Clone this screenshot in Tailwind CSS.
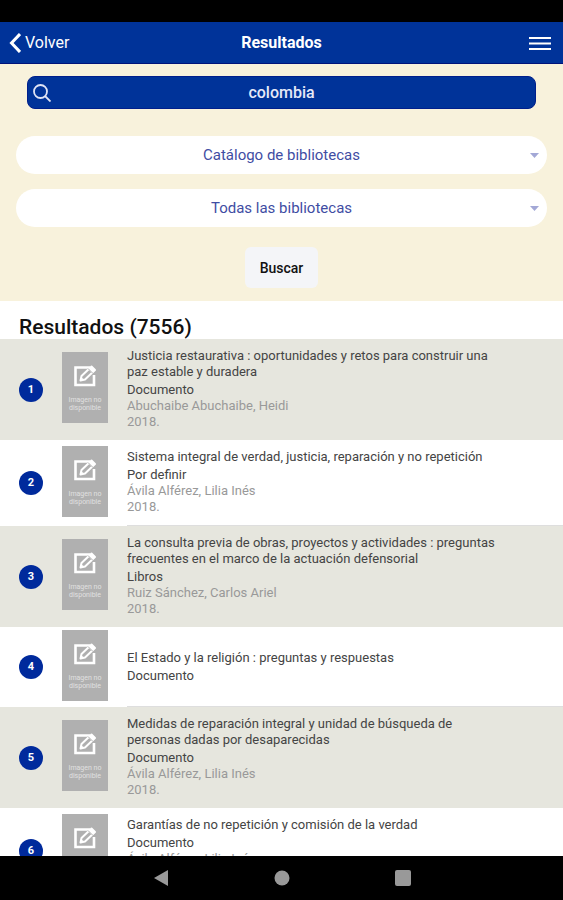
<!doctype html>
<html lang="es">
<head>
  <meta charset="UTF-8">
  <meta name="viewport" content="width=device-width, initial-scale=1.0">
  <title>Resultados</title>
  <script src="https://cdn.jsdelivr.net/npm/@tailwindcss/browser@4"></script>
</head>
<body class="flex h-screen flex-col overflow-hidden bg-white font-['Roboto',sans-serif] text-[#444]">
  <!-- Icons shared by the rows -->
  <svg class="hidden">
    <symbol id="edit" viewBox="0 0 24 24">
      <path d="M17 3.500H2.500v17.500H21V11" fill="none" stroke="#fff" stroke-width="2.600"/>
      <path d="M7.500 16.500l1-4.500L18.500 2.500l3.500 3.500L12 15.500z" fill="#b0b0b0" stroke="#fff" stroke-width="2" stroke-linejoin="round"/>
      <path d="M7.500 16.500l.8-3.500 2.700 2.700zM15.500 5.500l3-3 3.500 3.500-3 3z" fill="#fff"/>
      <path d="M15 4.500l5 5" stroke="#b0b0b0" stroke-width="1"/>
    </symbol>
  </svg>

  <!-- Status bar -->
  <div class="h-[22px] shrink-0 bg-black"></div>

  <!-- Header -->
  <header class="grid h-[42px] shrink-0 grid-cols-3 items-center border-b border-[#00137a] bg-[#003399] px-[9px] pt-px text-white">
    <a href="#" class="flex items-center gap-1 text-base">
      <svg class="h-5 w-3" viewBox="0 0 12 20" fill="none" stroke="currentColor" stroke-width="3"><path d="M11 1L2.500 10L11 19"/></svg>
      Volver
    </a>
    <h1 class="text-center text-base font-bold">Resultados</h1>
    <button type="button" aria-label="Menú" class="mr-[3px] justify-self-end">
      <svg class="h-4 w-[22px]" viewBox="0 0 22 16" stroke="currentColor" stroke-width="2"><path d="M0 3h22M0 8.500h22M0 14h22"/></svg>
    </button>
  </header>

  <main class="min-h-0 flex-1 overflow-hidden">
    <!-- Search form -->
    <form class="flex flex-col items-center bg-[#f8f2dc] px-4 pt-3 pb-[13px]">
      <label class="mx-[11px] flex h-[33px] items-center self-stretch rounded-lg border border-[#001f8c] bg-[#003399] px-[5px] text-white">
        <svg class="size-[18px] shrink-0" viewBox="0 0 18 18" fill="none" stroke="#dfe3f5" stroke-width="1.800"><circle cx="7.500" cy="7.500" r="6.500"/><path d="M12 12l5.500 5.500"/></svg>
        <input type="text" aria-label="Buscar" value="colombia" class="mr-[18px] w-full min-w-0 bg-transparent text-center text-base font-medium text-[#e6e9f8] outline-none">
      </label>
      <div class="relative mt-[27px] w-full">
        <select aria-label="Catálogo" class="h-[38px] w-full appearance-none rounded-full bg-white text-center text-[15px] text-[#3f4da3] [text-align-last:center]">
          <option>Catálogo de bibliotecas</option>
        </select>
        <svg class="pointer-events-none absolute top-[17px] right-2 h-[5px] w-[9px]" viewBox="0 0 9 5"><path d="M0 0h9L4.500 5z" fill="#a3a8d6"/></svg>
      </div>
      <div class="relative mt-[15px] w-full">
        <select aria-label="Biblioteca" class="h-[38px] w-full appearance-none rounded-full bg-white text-center text-[15px] text-[#3f4da3] [text-align-last:center]">
          <option>Todas las bibliotecas</option>
        </select>
        <svg class="pointer-events-none absolute top-[17px] right-2 h-[5px] w-[9px]" viewBox="0 0 9 5"><path d="M0 0h9L4.500 5z" fill="#a3a8d6"/></svg>
      </div>
      <button type="button" class="mt-5 h-[41px] rounded-md bg-[#f4f5f8] px-[15px] text-sm font-medium text-[#111]">Buscar</button>
    </form>

    <h2 class="px-[19px] pt-[14px] text-[21px] leading-6 font-medium text-[#111]">Resultados (7556)</h2>

    <!-- Results -->
    <ol class="text-[13px] leading-4">
      <li class="flex items-center bg-[#e6e6de] pl-[19px]">
        <span class="grid size-6 shrink-0 place-items-center rounded-full bg-[#002a9c] text-[11px] font-bold text-white">1</span>
        <div class="mb-1 ml-[19px] flex h-[71px] w-[46px] shrink-0 flex-col items-center bg-[#b0b0b0] pt-3 text-white">
          <svg class="size-6"><use href="#edit"/></svg>
          <p class="mt-2 text-center text-[7px] leading-2 text-[#e0e0e0]">Imagen no<br>disponible</p>
        </div>
        <div class="ml-[19px] flex-1 pt-[9px] pr-14 pb-[10px]">
          <h3 class="mb-[2px]">Justicia restaurativa : oportunidades y retos para construir una paz estable y duradera</h3>
          <p>Documento</p>
          <p class="text-[#999]">Abuchaibe Abuchaibe, Heidi</p>
          <p class="text-[#999]">2018.</p>
        </div>
      </li>
      <li class="flex items-center bg-white pl-[19px]">
        <span class="grid size-6 shrink-0 place-items-center rounded-full bg-[#002a9c] text-[11px] font-bold text-white">2</span>
        <div class="mb-1 ml-[19px] flex h-[71px] w-[46px] shrink-0 flex-col items-center bg-[#b0b0b0] pt-3 text-white">
          <svg class="size-6"><use href="#edit"/></svg>
          <p class="mt-2 text-center text-[7px] leading-2 text-[#e0e0e0]">Imagen no<br>disponible</p>
        </div>
        <div class="ml-[19px] flex-1 border-b border-[#dedede] pt-[9px] pr-14 pb-[10px]">
          <h3 class="mb-[2px]">Sistema integral de verdad, justicia, reparación y no repetición</h3>
          <p>Por definir</p>
          <p class="text-[#999]">Ávila Alférez, Lilia Inés</p>
          <p class="text-[#999]">2018.</p>
        </div>
      </li>
      <li class="flex items-center bg-[#e6e6de] pl-[19px]">
        <span class="grid size-6 shrink-0 place-items-center rounded-full bg-[#002a9c] text-[11px] font-bold text-white">3</span>
        <div class="mb-1 ml-[19px] flex h-[71px] w-[46px] shrink-0 flex-col items-center bg-[#b0b0b0] pt-3 text-white">
          <svg class="size-6"><use href="#edit"/></svg>
          <p class="mt-2 text-center text-[7px] leading-2 text-[#e0e0e0]">Imagen no<br>disponible</p>
        </div>
        <div class="ml-[19px] flex-1 pt-[9px] pr-14 pb-[10px]">
          <h3 class="mb-[2px]">La consulta previa de obras, proyectos y actividades : preguntas frecuentes en el marco de la actuación defensorial</h3>
          <p>Libros</p>
          <p class="text-[#999]">Ruiz Sánchez, Carlos Ariel</p>
          <p class="text-[#999]">2018.</p>
        </div>
      </li>
      <li class="flex min-h-20 items-center bg-white pl-[19px]">
        <span class="grid size-6 shrink-0 place-items-center rounded-full bg-[#002a9c] text-[11px] font-bold text-white">4</span>
        <div class="mb-1 ml-[19px] flex h-[71px] w-[46px] shrink-0 flex-col items-center bg-[#b0b0b0] pt-3 text-white">
          <svg class="size-6"><use href="#edit"/></svg>
          <p class="mt-2 text-center text-[7px] leading-2 text-[#e0e0e0]">Imagen no<br>disponible</p>
        </div>
        <div class="ml-[19px] flex flex-1 flex-col justify-center self-stretch border-b border-[#dedede] pr-14">
          <h3 class="mb-[2px]">El Estado y la religión : preguntas y respuestas</h3>
          <p>Documento</p>
        </div>
      </li>
      <li class="flex items-center bg-[#e6e6de] pl-[19px]">
        <span class="grid size-6 shrink-0 place-items-center rounded-full bg-[#002a9c] text-[11px] font-bold text-white">5</span>
        <div class="mb-1 ml-[19px] flex h-[71px] w-[46px] shrink-0 flex-col items-center bg-[#b0b0b0] pt-3 text-white">
          <svg class="size-6"><use href="#edit"/></svg>
          <p class="mt-2 text-center text-[7px] leading-2 text-[#e0e0e0]">Imagen no<br>disponible</p>
        </div>
        <div class="ml-[19px] flex-1 pt-[9px] pr-14 pb-[10px]">
          <h3 class="mb-[2px]">Medidas de reparación integral y unidad de búsqueda de personas dadas por desaparecidas</h3>
          <p>Documento</p>
          <p class="text-[#999]">Ávila Alférez, Lilia Inés</p>
          <p class="text-[#999]">2018.</p>
        </div>
      </li>
      <li class="flex items-center bg-white pl-[19px]">
        <span class="grid size-6 shrink-0 place-items-center rounded-full bg-[#002a9c] text-[11px] font-bold text-white">6</span>
        <div class="mb-1 ml-[19px] flex h-[71px] w-[46px] shrink-0 flex-col items-center bg-[#b0b0b0] pt-3 text-white">
          <svg class="size-6"><use href="#edit"/></svg>
          <p class="mt-2 text-center text-[7px] leading-2 text-[#e0e0e0]">Imagen no<br>disponible</p>
        </div>
        <div class="ml-[19px] flex-1 border-b border-[#dedede] pt-[9px] pr-14 pb-[10px]">
          <h3 class="mb-[2px]">Garantías de no repetición y comisión de la verdad</h3>
          <p>Documento</p>
          <p class="text-[#999]">Ávila Alférez, Lilia Inés</p>
          <p class="text-[#999]">2018.</p>
        </div>
      </li>
    </ol>
  </main>

  <!-- Android navigation -->
  <nav class="flex h-11 shrink-0 items-center justify-center gap-[105px] bg-black text-[#999]">
    <button type="button" aria-label="Atrás"><svg class="size-4" viewBox="0 0 16 16" fill="currentColor"><path d="M15 0v16L1 8z"/></svg></button>
    <button type="button" aria-label="Inicio"><svg class="size-4" viewBox="0 0 16 16" fill="currentColor"><circle cx="8" cy="8" r="7.500"/></svg></button>
    <button type="button" aria-label="Recientes"><svg class="size-4" viewBox="0 0 16 16" fill="currentColor"><rect width="16" height="16" rx="2"/></svg></button>
  </nav>
</body>
</html>
